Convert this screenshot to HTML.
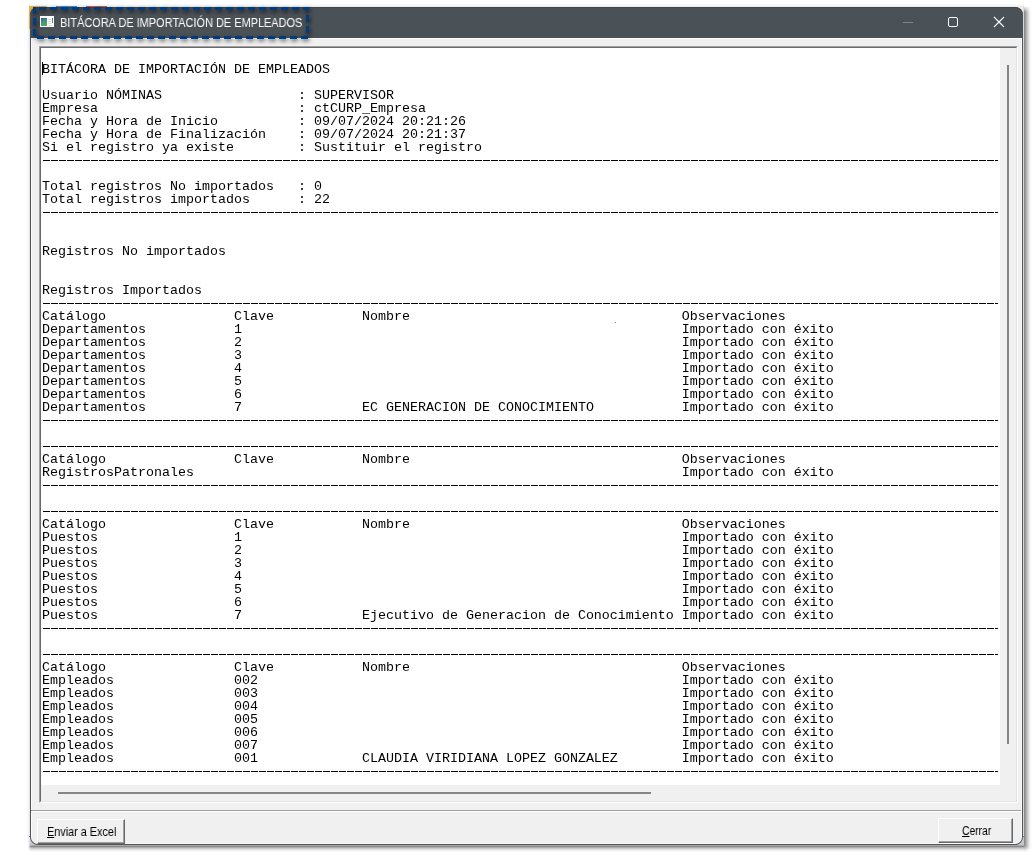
<!DOCTYPE html>
<html><head><meta charset="utf-8">
<style>
html,body{margin:0;padding:0;}
body{width:1033px;height:855px;background:#fff;position:relative;overflow:hidden;font-family:"Liberation Sans",sans-serif;}
div{box-sizing:border-box;}
#frame{position:absolute;left:30px;top:7px;width:993px;height:838px;border-radius:8px;background:#4f575d;}
#titlebar{position:absolute;left:30px;top:7px;width:993px;height:31px;border-radius:8px 8px 0 0;background:#4a5157;border-top:1px solid #40484e;}
#body{position:absolute;left:31px;top:38px;width:991px;height:806px;border-radius:0 0 7px 7px;background:#f0f0f0;border:1px solid #fafafa;border-top:1px solid #fbfbfb;}
#ttext{position:absolute;left:60px;top:16px;font-size:12px;color:#fff;white-space:nowrap;transform:scaleX(0.9125);transform-origin:0 0;will-change:transform;}
#tbo{position:absolute;left:39px;top:46px;width:979px;height:757px;border-top:1px solid #a0a0a0;border-left:1px solid #a0a0a0;border-right:1px solid #fff;border-bottom:1px solid #fff;}
#tbi{position:absolute;left:40px;top:47px;width:977px;height:755px;border-top:1px solid #696969;border-left:1px solid #696969;border-right:1px solid #e3e3e3;border-bottom:1px solid #e3e3e3;}
#white{position:absolute;left:41px;top:48px;width:959px;height:737px;background:#fff;overflow:hidden;}
#clip{position:absolute;left:0;top:0;width:957px;height:737px;overflow:hidden;}
#log{will-change:transform;position:absolute;left:1px;top:15px;margin:0;font-family:"Liberation Mono",monospace;font-size:13.333px;line-height:13px;color:#000;white-space:pre;}
.dl{position:absolute;left:2px;width:955px;height:1px;background:repeating-linear-gradient(90deg,#000 0,#000 7px,transparent 7px,transparent 8px);}
#vsb{position:absolute;left:1000px;top:48px;width:16px;height:737px;background:#f0f0f0;}
#vth{position:absolute;left:1007px;top:65px;width:2px;height:679px;background:#858585;}
#hsb{position:absolute;left:41px;top:785px;width:975px;height:16px;background:#f0f0f0;}
#hth{position:absolute;left:58px;top:792px;width:593px;height:2px;background:#858585;}
#sep{position:absolute;left:31px;top:810px;width:990px;height:1px;background:#a0a0a0;}
#sep2{position:absolute;left:31px;top:811px;width:990px;height:1px;background:#fff;}
.btn{position:absolute;background:#f0f0f0;border-top:1px solid #fff;border-left:1px solid #fff;border-right:1px solid #696969;border-bottom:1px solid #696969;box-shadow:inset -1px -1px 0 #a0a0a0,inset 1px 1px 0 #f0f0f0;font-size:11px;color:#000;text-align:center;white-space:nowrap;}
.bt{position:absolute;font-size:12px;line-height:14px;color:#000;white-space:nowrap;transform-origin:0 0;will-change:transform;}
.btn u{text-decoration:underline;}
</style></head><body>
<div style="position:absolute;left:29px;top:4px;width:995px;height:1px;background:#fafafa;"></div>
<div style="position:absolute;left:29px;top:5px;width:995px;height:1px;background:#f4f4f4;"></div>
<div style="position:absolute;left:29px;top:6px;width:995px;height:12px;background:#ececec;"></div>
<div style="position:absolute;left:1023px;top:6px;width:1px;height:832px;background:#d8d8d8;"></div>
<div style="position:absolute;left:29px;top:836px;width:995px;height:9px;background:#c8c8c8;"></div>
<div id="rs" style="position:absolute;left:1024px;top:6px;width:8px;height:839px;background:linear-gradient(90deg,#8c8c8c 0,#8c8c8c 1px,#9e9e9e 1px,#9e9e9e 2px,#b4b4b4 2px,#b4b4b4 3px,#c8c8c8 3px,#c8c8c8 4px,#dcdcdc 4px,#dcdcdc 5px,#ececec 5px,#ececec 6px,#f8f8f8 6px,#f8f8f8 7px,#fdfdfd 7px);-webkit-mask-image:linear-gradient(180deg,transparent 0,#000 6px);"></div>
<div id="bs" style="position:absolute;left:28px;top:845px;width:998px;height:7px;background:linear-gradient(180deg,#a8a8a8 0,#a8a8a8 1px,#8a8a8a 1px,#8a8a8a 2px,#b0b0b0 2px,#b0b0b0 3px,#cccccc 3px,#cccccc 4px,#e0e0e0 4px,#e0e0e0 5px,#f0f0f0 5px,#f0f0f0 6px,#fafafa 6px);-webkit-mask-image:linear-gradient(90deg,transparent 0,#000 3px);"></div>
<div id="cs" style="position:absolute;left:1024px;top:845px;width:8px;height:7px;background:radial-gradient(circle at 0 0,#8c8c8c 0,#9e9e9e 1.5px,#c8c8c8 3.5px,#ececec 5.5px,#fdfdfd 7.5px,#fff 8.5px);"></div>
<div style="position:absolute;left:27px;top:12px;width:3px;height:832px;background:linear-gradient(90deg,#fafafa 0,#fafafa 1px,#f2f2f2 1px,#f2f2f2 2px,#e6e6e6 2px);"></div>
<div style="position:absolute;left:29px;top:6px;width:9px;height:9px;background:#e8b449;"></div>
<div id="frame"></div>
<div id="titlebar"></div>
<div id="body"></div>
<div style="position:absolute;left:29px;top:6px;width:18px;height:1px;background:#e8b04a;"></div>
<div style="position:absolute;left:29px;top:6px;width:1px;height:23px;background:#e8b04a;"></div>
<div style="position:absolute;left:47px;top:6px;width:9px;height:1px;background:#f4f4f4;"></div>
<div style="position:absolute;left:56px;top:6px;width:21px;height:1px;background:#3d8fd6;"></div>
<div style="position:absolute;left:77px;top:6px;width:9px;height:1px;background:#f4f4f4;"></div>
<div style="position:absolute;left:86px;top:6px;width:21px;height:1px;background:#d9553f;"></div>
<svg style="position:absolute;left:0;top:0;filter:drop-shadow(1px 2px 2px rgba(0,0,0,0.7))" width="320" height="50" shape-rendering="crispEdges"><g fill="#003c80"><rect x="33" y="7" width="2" height="3"/><rect x="39" y="7" width="7" height="3"/><rect x="50" y="7" width="7" height="3"/><rect x="61" y="7" width="7" height="3"/><rect x="72" y="7" width="7" height="3"/><rect x="83" y="7" width="7" height="3"/><rect x="94" y="7" width="7" height="3"/><rect x="105" y="7" width="7" height="3"/><rect x="116" y="7" width="7" height="3"/><rect x="127" y="7" width="7" height="3"/><rect x="138" y="7" width="7" height="3"/><rect x="149" y="7" width="7" height="3"/><rect x="160" y="7" width="7" height="3"/><rect x="171" y="7" width="7" height="3"/><rect x="182" y="7" width="7" height="3"/><rect x="193" y="7" width="7" height="3"/><rect x="204" y="7" width="7" height="3"/><rect x="215" y="7" width="7" height="3"/><rect x="226" y="7" width="7" height="3"/><rect x="237" y="7" width="7" height="3"/><rect x="248" y="7" width="7" height="3"/><rect x="259" y="7" width="7" height="3"/><rect x="270" y="7" width="7" height="3"/><rect x="281" y="7" width="7" height="3"/><rect x="292" y="7" width="7" height="3"/><rect x="303" y="7" width="6" height="3"/><rect x="37" y="36" width="7" height="3"/><rect x="48" y="36" width="7" height="3"/><rect x="59" y="36" width="7" height="3"/><rect x="70" y="36" width="7" height="3"/><rect x="81" y="36" width="7" height="3"/><rect x="92" y="36" width="7" height="3"/><rect x="103" y="36" width="7" height="3"/><rect x="114" y="36" width="7" height="3"/><rect x="125" y="36" width="7" height="3"/><rect x="136" y="36" width="7" height="3"/><rect x="147" y="36" width="7" height="3"/><rect x="158" y="36" width="7" height="3"/><rect x="169" y="36" width="7" height="3"/><rect x="180" y="36" width="7" height="3"/><rect x="191" y="36" width="7" height="3"/><rect x="202" y="36" width="7" height="3"/><rect x="213" y="36" width="7" height="3"/><rect x="224" y="36" width="7" height="3"/><rect x="235" y="36" width="7" height="3"/><rect x="246" y="36" width="7" height="3"/><rect x="257" y="36" width="7" height="3"/><rect x="268" y="36" width="7" height="3"/><rect x="279" y="36" width="7" height="3"/><rect x="290" y="36" width="7" height="3"/><rect x="301" y="36" width="7" height="3"/><rect x="33" y="7" width="3" height="7"/><rect x="33" y="18" width="3" height="7"/><rect x="33" y="29" width="3" height="7"/><rect x="306" y="7" width="3" height="4"/><rect x="306" y="15" width="3" height="7"/><rect x="306" y="26" width="3" height="7"/></g></svg>
<svg style="position:absolute;left:40px;top:16px" width="14" height="11" viewBox="0 0 14 11">
<defs><linearGradient id="g1" x1="0" y1="0" x2="0.3" y2="1"><stop offset="0" stop-color="#2f5f9f"/><stop offset="0.5" stop-color="#468f8a"/><stop offset="1" stop-color="#4fa65c"/></linearGradient></defs>
<rect x="0" y="0" width="14" height="11" fill="#fdfdfd"/>
<rect x="1" y="2" width="6" height="8" fill="url(#g1)"/>
<rect x="8" y="3" width="3" height="1" fill="#d8d8d8"/><rect x="8" y="5" width="3" height="1" fill="#d8d8d8"/><rect x="8" y="7" width="3" height="1" fill="#dcdcdc"/><rect x="8" y="9" width="4" height="1" fill="#e0e0e0"/>
<rect x="12" y="2" width="1" height="5" fill="url(#g1)"/>
</svg>
<div id="ttext">BITÁCORA DE IMPORTACIÓN DE EMPLEADOS</div>
<div style="position:absolute;left:903px;top:22px;width:10px;height:1px;background:#7d8489;"></div>
<div style="position:absolute;left:948px;top:17px;width:10px;height:10px;border:1px solid #fff;border-radius:2px;"></div>
<svg style="position:absolute;left:993px;top:16px" width="12" height="12" viewBox="0 0 12 12"><path d="M1 1L11 11M11 1L1 11" stroke="#fff" stroke-width="1.1" fill="none"/></svg>
<div style="position:absolute;left:29px;top:836px;width:1px;height:1px;background:#4a78b8;"></div>
<div style="position:absolute;left:1023px;top:836px;width:1px;height:1px;background:#4a78b8;"></div>
<div id="tbo"></div>
<div id="tbi"></div>
<div id="white"><div id="clip">
<pre id="log">BITÁCORA DE IMPORTACIÓN DE EMPLEADOS

Usuario NÓMINAS                 : SUPERVISOR
Empresa                         : ctCURP_Empresa
Fecha y Hora de Inicio          : 09/07/2024 20:21:26
Fecha y Hora de Finalización    : 09/07/2024 20:21:37
Si el registro ya existe        : Sustituir el registro


Total registros No importados   : 0
Total registros importados      : 22



Registros No importados


Registros Importados

Catálogo                Clave           Nombre                                  Observaciones
Departamentos           1                                                       Importado con éxito
Departamentos           2                                                       Importado con éxito
Departamentos           3                                                       Importado con éxito
Departamentos           4                                                       Importado con éxito
Departamentos           5                                                       Importado con éxito
Departamentos           6                                                       Importado con éxito
Departamentos           7               EC GENERACION DE CONOCIMIENTO           Importado con éxito



Catálogo                Clave           Nombre                                  Observaciones
RegistrosPatronales                                                             Importado con éxito



Catálogo                Clave           Nombre                                  Observaciones
Puestos                 1                                                       Importado con éxito
Puestos                 2                                                       Importado con éxito
Puestos                 3                                                       Importado con éxito
Puestos                 4                                                       Importado con éxito
Puestos                 5                                                       Importado con éxito
Puestos                 6                                                       Importado con éxito
Puestos                 7               Ejecutivo de Generacion de Conocimiento Importado con éxito



Catálogo                Clave           Nombre                                  Observaciones
Empleados               002                                                     Importado con éxito
Empleados               003                                                     Importado con éxito
Empleados               004                                                     Importado con éxito
Empleados               005                                                     Importado con éxito
Empleados               006                                                     Importado con éxito
Empleados               007                                                     Importado con éxito
Empleados               001             CLAUDIA VIRIDIANA LOPEZ GONZALEZ        Importado con éxito
</pre>
<div class="dl" style="top:112px"></div>
<div class="dl" style="top:164px"></div>
<div class="dl" style="top:255px"></div>
<div class="dl" style="top:372px"></div>
<div class="dl" style="top:398px"></div>
<div class="dl" style="top:437px"></div>
<div class="dl" style="top:463px"></div>
<div class="dl" style="top:580px"></div>
<div class="dl" style="top:606px"></div>
<div class="dl" style="top:723px"></div>
</div></div>
<div style="position:absolute;left:42px;top:62px;width:1px;height:13px;background:#000;"></div>
<div id="vsb"></div><div id="vth"></div>
<div id="hsb"></div><div id="hth"></div>
<div style="position:absolute;left:615px;top:322px;width:1px;height:1px;background:#888;"></div>
<div id="sep"></div><div id="sep2"></div>
<div class="btn" style="left:37px;top:819px;width:88px;height:25px;"></div><span class="bt" style="left:47px;top:825px;transform:scaleX(0.905);"><u>E</u>nviar a Excel</span>
<div class="btn" style="left:938px;top:818px;width:75px;height:25px;"></div><span class="bt" style="left:962px;top:824px;transform:scaleX(0.86);"><u>C</u>errar</span>
</body></html>
